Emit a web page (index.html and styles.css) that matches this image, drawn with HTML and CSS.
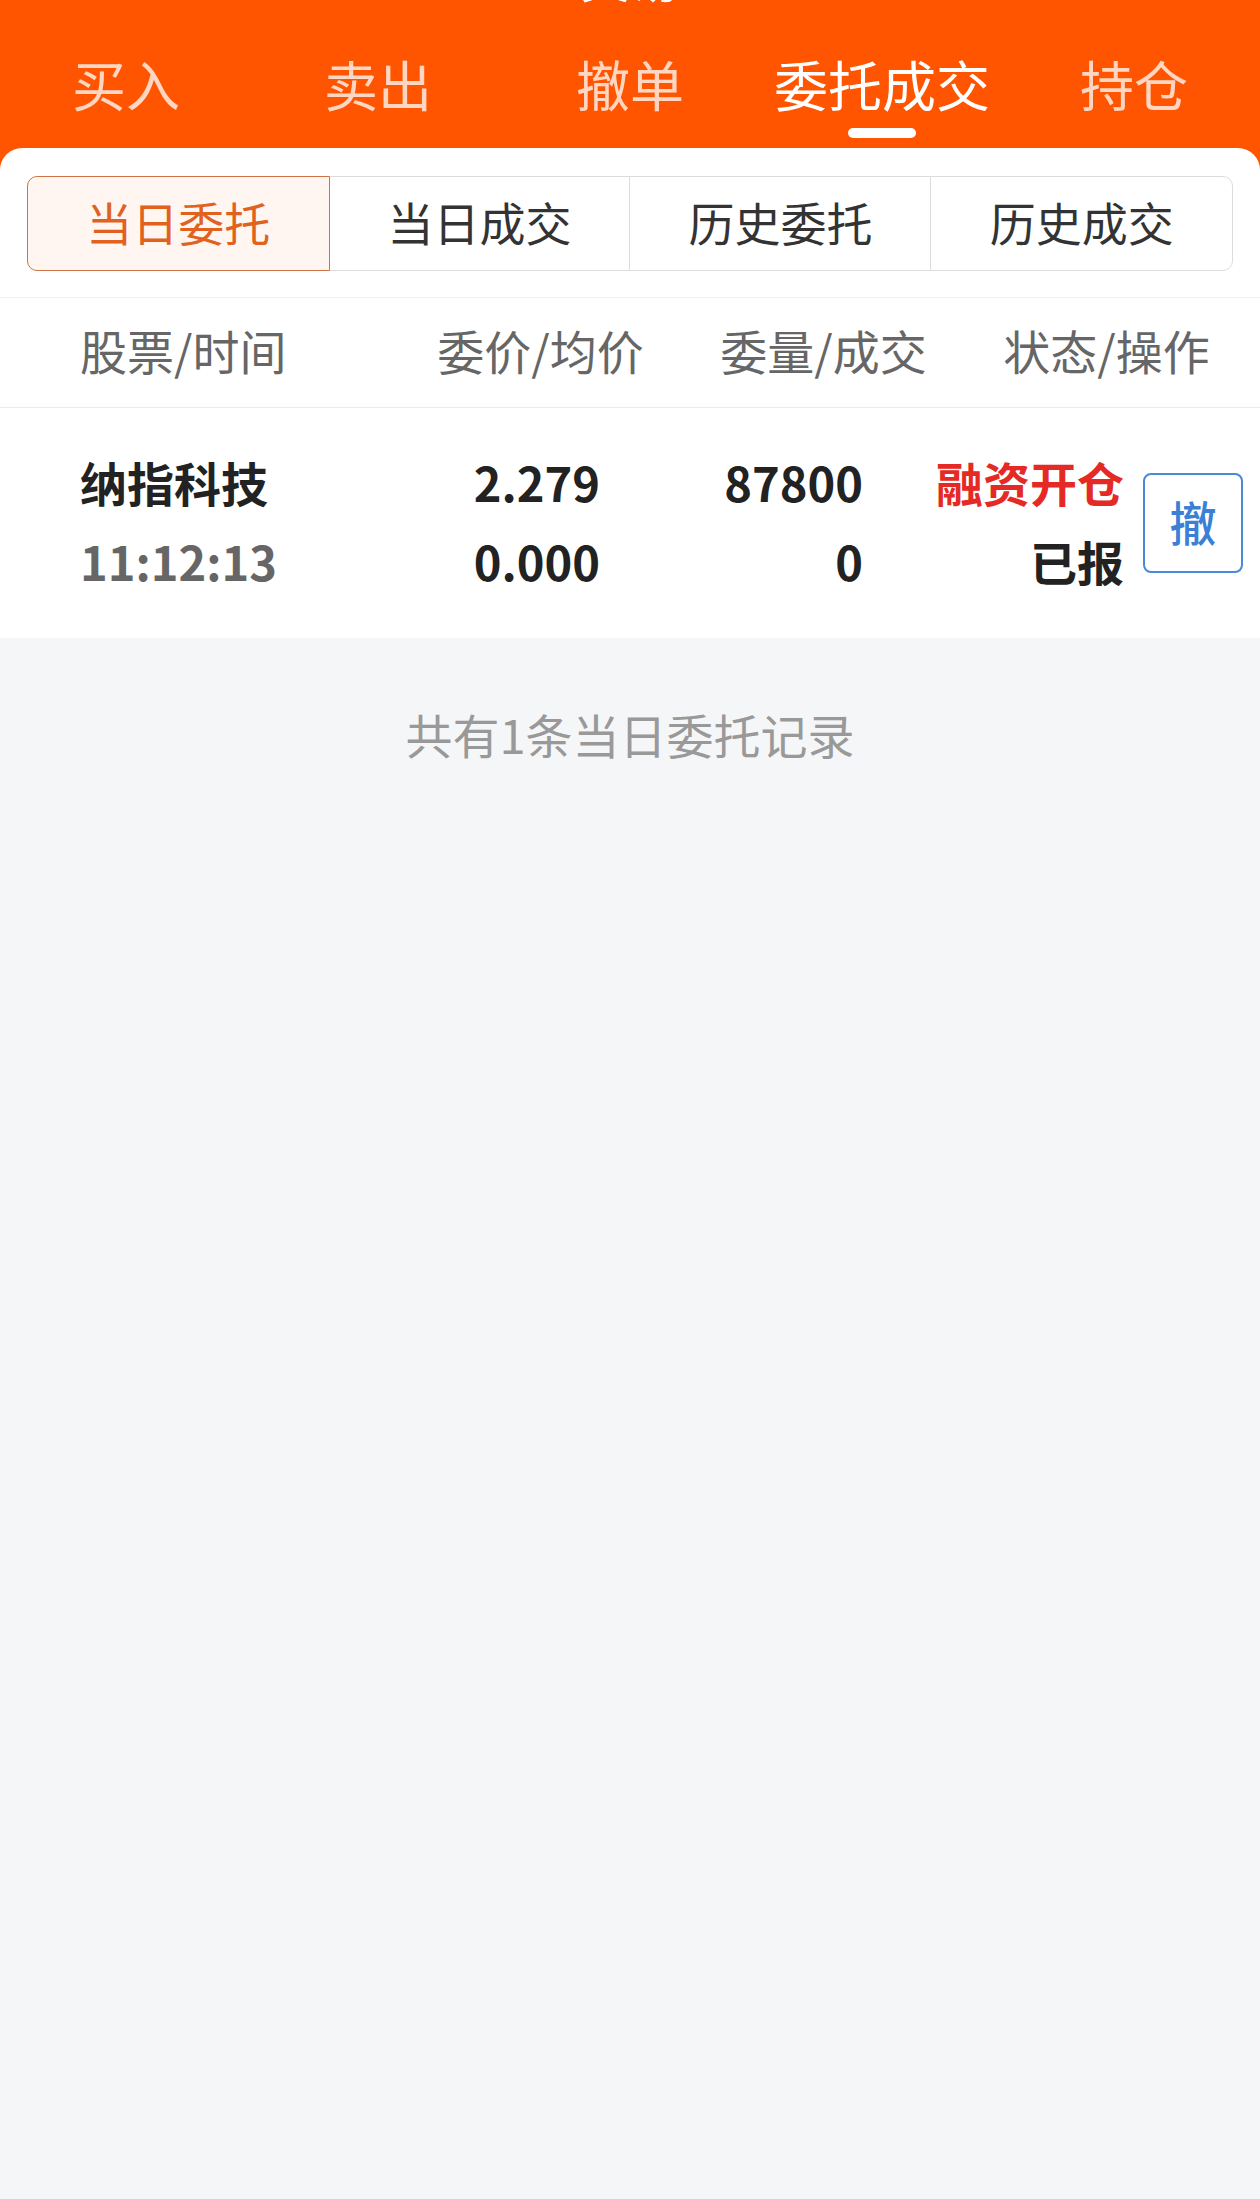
FILE: index.html
```html
<!DOCTYPE html>
<html lang="zh-CN">
<head>
<meta charset="utf-8">
<title>委托成交</title>
<link rel="stylesheet" href="styles.css">
</head>
<body>
<div class="app">
  <header class="topbar">
    <div class="title">交易</div>
    <nav class="tabs">
      <div class="tab">买入</div>
      <div class="tab">卖出</div>
      <div class="tab">撤单</div>
      <div class="tab active">委托成交<span class="indicator"></span></div>
      <div class="tab">持仓</div>
    </nav>
  </header>

  <section class="card">
    <div class="segments">
      <div class="seg active">当日委托</div>
      <div class="seg">当日成交</div>
      <div class="seg">历史委托</div>
      <div class="seg">历史成交</div>
    </div>

    <div class="thead">
      <div class="th th-left">股票/时间</div>
      <div class="th">委价/均价</div>
      <div class="th">委量/成交</div>
      <div class="th">状态/操作</div>
    </div>

    <div class="trow">
      <div class="cell cell-left">
        <div class="line name">纳指科技</div>
        <div class="line time">11:12:13</div>
      </div>
      <div class="cell">
        <div class="line">2.279</div>
        <div class="line">0.000</div>
      </div>
      <div class="cell">
        <div class="line">87800</div>
        <div class="line">0</div>
      </div>
      <div class="cell">
        <div class="line red">融资开仓</div>
        <div class="line">已报</div>
      </div>
      <div class="cell-btn">
        <button class="cancel">撤</button>
      </div>
    </div>
  </section>

  <p class="summary">共有1条当日委托记录</p>
</div>
</body>
</html>
```

FILE: styles.css
```css
* { box-sizing: border-box; }

html, body {
  margin: 0;
  padding: 0;
}

body {
  background: #f5f6f8;
  font-family: "Noto Sans CJK SC", "Noto Sans", sans-serif;
  overflow: hidden;
}

.app {
  min-height: 2199px;
  background: linear-gradient(#ff5500 0, #ff5500 180px, #f5f6f8 180px);
}

.topbar {
  background: #ff5500;
  display: flex;
  flex-direction: column;
}

.title {
  height: 60px;
  margin-top: -54px;
  line-height: 60px;
  font-size: 50px;
  text-align: center;
  color: #ffffff;
}

.tabs {
  display: flex;
  height: 142px;
}

.tab {
  flex: 1;
  display: flex;
  flex-direction: column;
  align-items: center;
  padding-top: 51px;
  font-size: 54px;
  line-height: 54px;
  color: rgba(255, 255, 255, 0.76);
}

.tab.active {
  color: #ffffff;
}

.indicator {
  display: block;
  width: 68px;
  height: 10px;
  margin-top: 17px;
  border-radius: 5px;
  background: #ffffff;
}

.card {
  background: #ffffff;
  border-radius: 22px 22px 0 0;
}

.segments {
  display: flex;
  padding: 28px 27px 26px;
}

.seg {
  flex: 1;
  height: 95px;
  display: flex;
  align-items: center;
  justify-content: center;
  padding-bottom: 5px;
  font-size: 46px;
  color: #333333;
  border: 1.5px solid #dcdcdc;
  margin-left: -1.5px;
  background: #ffffff;
  position: relative;
}

.seg:first-child {
  margin-left: 0;
  border-radius: 10px 0 0 10px;
}

.seg:last-child {
  border-radius: 0 10px 10px 0;
}

.seg.active {
  z-index: 1;
  border-color: #cf7446;
  background: #fff6f1;
  color: #e0621e;
}

.thead {
  display: grid;
  grid-template-columns: 1fr 283px 283px 283px;
  align-items: center;
  height: 111px;
  padding: 0 12px 6px 80px;
  border-top: 1px solid #f1f1f1;
  border-bottom: 1px solid #ebebeb;
}

.th {
  font-size: 47px;
  color: #666666;
  text-align: center;
}

.th-left {
  text-align: left;
}

.trow {
  display: grid;
  grid-template-columns: 1fr 200px 263px 261px 119px;
  align-items: center;
  height: 230px;
  padding: 0 17px 0 80px;
}

.cell {
  display: flex;
  flex-direction: column;
  align-items: flex-end;
  padding-bottom: 5px;
}

.cell-left {
  align-items: flex-start;
}

.line {
  font-size: 47px;
  line-height: 79px;
  font-weight: 700;
  color: #222222;
  white-space: nowrap;
}

.time {
  color: #666666;
}

.red {
  color: #e52a25;
}

.cell-btn {
  display: flex;
  justify-content: flex-end;
}

.cancel {
  width: 100px;
  height: 100px;
  padding: 0 0 5px;
  border: 2px solid #4a88d8;
  border-radius: 8px;
  background: #ffffff;
  color: #3b7fd6;
  font-family: "Noto Sans CJK SC", sans-serif;
  font-size: 47px;
  font-weight: 500;
}

.summary {
  margin: 0;
  padding-top: 66px;
  font-size: 47px;
  line-height: 60px;
  color: #999999;
  text-align: center;
}
```
